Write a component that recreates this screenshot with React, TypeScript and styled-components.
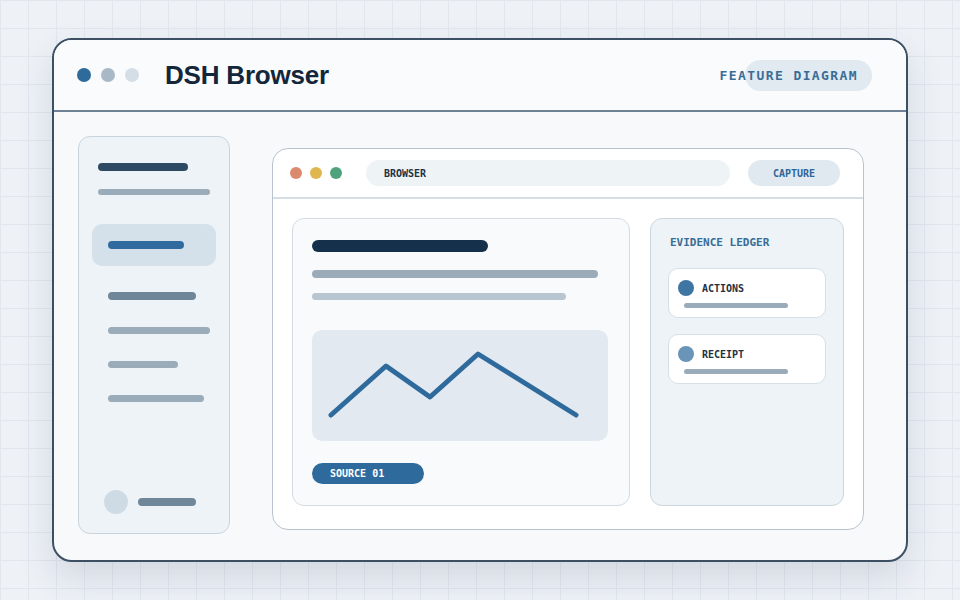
import styled, { createGlobalStyle } from 'styled-components'

const GlobalStyle = createGlobalStyle`
  html, body {
    margin: 0;
    padding: 0;
  }
  body {
    width: 960px;
    height: 600px;
    overflow: hidden;
    background-color: #eef2f7;
    background-image:
      linear-gradient(to right, #e1e7ee 1px, transparent 1px),
      linear-gradient(to bottom, #e1e7ee 1px, transparent 1px);
    background-size: 28px 28px;
    font-family: 'Liberation Sans', Arial, sans-serif;
  }
`

const mono = `'DejaVu Sans Mono', 'Liberation Mono', monospace`

export default function App() {
  return (
    <>
      <GlobalStyle />
      <Stage>
        <Window>
          <Header>
            <Dots>
              <Dot $size={14} $color="#2f6b9a" />
              <Dot $size={14} $color="#a9b8c6" />
              <Dot $size={14} $color="#d5dee6" />
            </Dots>
            <Title>DSH Browser</Title>
            <FeatureBadge>FEATURE DIAGRAM</FeatureBadge>
          </Header>

          <Body>
            <Sidebar>
              <Bar $w={90} $h={8} $color="#2e4a63" />
              <Bar $w={112} $h={6} $color="#9aabba" $mt={18} />
              <ActiveItem>
                <Bar $w={76} $h={8} $color="#2f6b9e" />
              </ActiveItem>
              <NavBar $w={88} $h={8} $color="#6f8799" $mt={26} />
              <NavBar $w={102} $h={7} $color="#9aabba" $mt={27} />
              <NavBar $w={70} $h={7} $color="#9aabba" $mt={27} />
              <NavBar $w={96} $h={7} $color="#9aabba" $mt={27} />
              <SidebarFooter>
                <Avatar />
                <Bar $w={58} $h={8} $color="#6f8799" />
              </SidebarFooter>
            </Sidebar>

            <BrowserPanel>
              <Toolbar>
                <Dots $gap={8}>
                  <Dot $size={12} $color="#dc8a6e" />
                  <Dot $size={12} $color="#e0b64e" />
                  <Dot $size={12} $color="#4ea37c" />
                </Dots>
                <UrlField>BROWSER</UrlField>
                <CaptureButton>CAPTURE</CaptureButton>
              </Toolbar>

              <Viewport>
                <MainCard>
                  <Bar $w={176} $h={12} $color="#15304a" />
                  <Bar $w={286} $h={8} $color="#9aabba" $mt={18} />
                  <Bar $w={254} $h={7} $color="#b8c6d2" $mt={15} />
                  <Chart>
                    <svg width="296" height="111" viewBox="0 0 296 111">
                      <polyline
                        points="19,85 74,36 118,67 166,24 264,85"
                        fill="none"
                        stroke="#2e6a9b"
                        strokeWidth="5"
                        strokeLinecap="round"
                        strokeLinejoin="round"
                      />
                    </svg>
                  </Chart>
                  <SourceButton>SOURCE 01</SourceButton>
                </MainCard>

                <Ledger>
                  <LedgerTitle>EVIDENCE LEDGER</LedgerTitle>
                  <LedgerItem>
                    <ItemRow>
                      <Dot $size={16} $color="#3f75a3" />
                      <ItemLabel>ACTIONS</ItemLabel>
                    </ItemRow>
                    <Bar $w={104} $h={5} $color="#9aabba" $mt={7} $ml={6} />
                  </LedgerItem>
                  <LedgerItem>
                    <ItemRow>
                      <Dot $size={16} $color="#6a94b8" />
                      <ItemLabel>RECEIPT</ItemLabel>
                    </ItemRow>
                    <Bar $w={104} $h={5} $color="#9aabba" $mt={7} $ml={6} />
                  </LedgerItem>
                </Ledger>
              </Viewport>
            </BrowserPanel>
          </Body>
        </Window>
      </Stage>
    </>
  )
}

/* ─── Styles ─── */

const Stage = styled.div`
  display: flex;
  padding: 38px 0 0 52px;
`

const Window = styled.div`
  display: flex;
  flex-direction: column;
  box-sizing: border-box;
  width: 856px;
  height: 524px;
  border: 2px solid #3d5063;
  border-radius: 20px;
  background: #f7f9fb;
  box-shadow: 0 16px 36px rgba(40, 60, 85, 0.14);
  overflow: hidden;
`

const Header = styled.div`
  display: flex;
  align-items: center;
  height: 70px;
  padding: 0 34px 0 23px;
  background: #f9fbfc;
  border-bottom: 2px solid #6e8296;
`

const Dots = styled.div<{ $gap?: number }>`
  display: flex;
  align-items: center;
  gap: ${p => p.$gap ?? 10}px;
`

const Dot = styled.span<{ $size: number; $color: string }>`
  flex: none;
  width: ${p => p.$size}px;
  height: ${p => p.$size}px;
  border-radius: 50%;
  background: ${p => p.$color};
`

const Title = styled.h1`
  margin: 0 0 0 26px;
  font-size: 26px;
  font-weight: 700;
  color: #14263a;
  letter-spacing: -0.2px;
`

const FeatureBadge = styled.div`
  display: flex;
  align-items: center;
  justify-content: flex-end;
  box-sizing: border-box;
  width: 127px;
  height: 31px;
  margin-left: auto;
  padding-right: 14px;
  border-radius: 16px;
  background: #e2eaf1;
  white-space: nowrap;
  font-family: ${mono};
  font-size: 13px;
  font-weight: 700;
  letter-spacing: 1.4px;
  color: #3a6d96;
`

const Body = styled.div`
  flex: 1;
  display: flex;
  align-items: flex-start;
  padding: 24px 0 0 24px;
`

const Bar = styled.div<{ $w: number; $h: number; $color: string; $mt?: number; $ml?: number }>`
  flex: none;
  width: ${p => p.$w}px;
  height: ${p => p.$h}px;
  margin-top: ${p => p.$mt ?? 0}px;
  margin-left: ${p => p.$ml ?? 0}px;
  border-radius: ${p => p.$h / 2}px;
  background: ${p => p.$color};
`

const Sidebar = styled.aside`
  display: flex;
  flex-direction: column;
  box-sizing: border-box;
  width: 152px;
  height: 398px;
  padding: 26px 20px 19px 19px;
  border: 1px solid #c9d3dc;
  border-radius: 12px;
  background: #eef3f7;
`

const ActiveItem = styled.div`
  display: flex;
  align-items: center;
  box-sizing: border-box;
  width: 124px;
  height: 42px;
  margin: 29px 0 0 -6px;
  padding-left: 16px;
  border-radius: 10px;
  background: #d5e1ea;
`

const NavBar = styled(Bar)`
  margin-left: 10px;
`

const SidebarFooter = styled.div`
  display: flex;
  align-items: center;
  gap: 10px;
  margin: auto 0 0 6px;
`

const Avatar = styled.div`
  width: 24px;
  height: 24px;
  border-radius: 50%;
  background: #cfdbe4;
`

const BrowserPanel = styled.section`
  display: flex;
  flex-direction: column;
  box-sizing: border-box;
  width: 592px;
  height: 382px;
  margin: 12px 0 0 42px;
  border: 1.5px solid #b7c3ce;
  border-radius: 16px;
  background: #ffffff;
  overflow: hidden;
`

const Toolbar = styled.div`
  display: flex;
  align-items: center;
  height: 48px;
  padding: 0 22px 0 17px;
  border-bottom: 2px solid #d6dee5;
`

const UrlField = styled.div`
  display: flex;
  align-items: center;
  width: 364px;
  height: 26px;
  margin-left: 24px;
  padding-left: 18px;
  box-sizing: border-box;
  border-radius: 13px;
  background: #eef3f6;
  font-family: ${mono};
  font-size: 10px;
  font-weight: 700;
  color: #1e3044;
`

const CaptureButton = styled.div`
  display: flex;
  align-items: center;
  justify-content: center;
  width: 92px;
  height: 26px;
  margin-left: 18px;
  border-radius: 13px;
  background: #e1e9f0;
  font-family: ${mono};
  font-size: 10px;
  font-weight: 700;
  color: #2f6596;
`

const Viewport = styled.div`
  display: flex;
  gap: 20px;
  padding: 19px 0 0 19px;
`

const MainCard = styled.div`
  display: flex;
  flex-direction: column;
  box-sizing: border-box;
  width: 338px;
  height: 288px;
  padding: 21px 19px;
  border: 1px solid #d3dbe2;
  border-radius: 12px;
  background: #f8fafc;
`

const Chart = styled.div`
  display: flex;
  width: 296px;
  height: 111px;
  margin-top: 30px;
  border-radius: 10px;
  background: #e2e9f0;
`

const SourceButton = styled.div`
  display: flex;
  align-items: center;
  box-sizing: border-box;
  width: 112px;
  height: 24px;
  margin-top: 22px;
  padding-left: 18px;
  border-radius: 12px;
  background: #2e6a9b;
  font-family: ${mono};
  font-size: 10px;
  font-weight: 700;
  color: #ffffff;
`

const Ledger = styled.div`
  display: flex;
  flex-direction: column;
  gap: 16px;
  box-sizing: border-box;
  width: 194px;
  height: 288px;
  padding: 17px 17px;
  border: 1px solid #ccd6de;
  border-radius: 12px;
  background: #edf3f6;
`

const LedgerTitle = styled.div`
  margin: 0 0 2px 2px;
  font-family: ${mono};
  font-size: 11px;
  font-weight: 700;
  color: #3a6d96;
  line-height: 14px;
`

const LedgerItem = styled.div`
  box-sizing: border-box;
  width: 158px;
  height: 50px;
  padding: 11px 9px;
  border: 1px solid #d6e0e6;
  border-radius: 10px;
  background: #ffffff;
`

const ItemRow = styled.div`
  display: flex;
  align-items: center;
  gap: 8px;
`

const ItemLabel = styled.span`
  font-family: ${mono};
  font-size: 10px;
  font-weight: 700;
  color: #1e3044;
`
